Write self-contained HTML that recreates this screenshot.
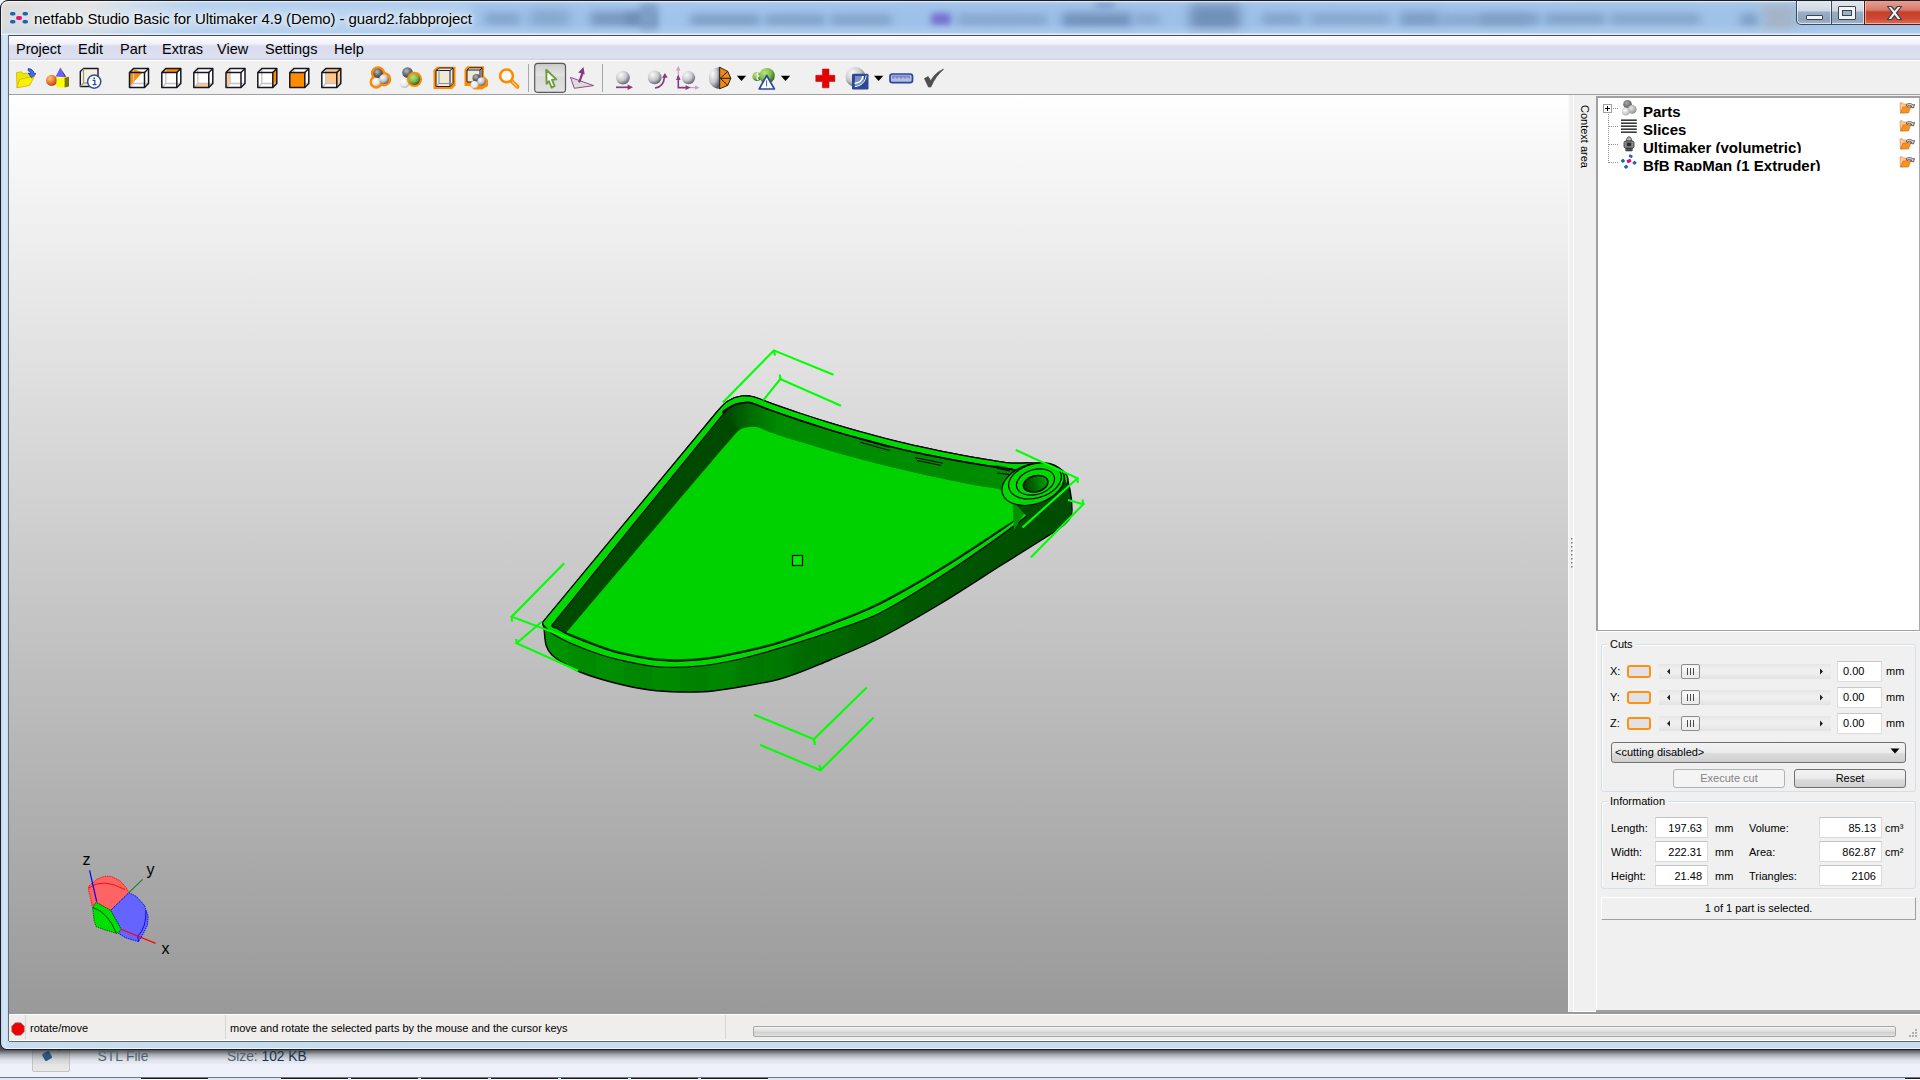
<!DOCTYPE html>
<html><head><meta charset="utf-8">
<style>
*{margin:0;padding:0;box-sizing:border-box}
html,body{width:1920px;height:1080px;overflow:hidden;background:#eef2f9;font-family:"Liberation Sans",sans-serif}
.a{position:absolute}
#frame{left:0;top:0;width:1930px;height:1049.5px;border-radius:8px 0 0 7px;background:linear-gradient(90deg,#c4daf0,#d6e6f6 4px,#c8dcf0 7px);border:1px solid #1b1f24;overflow:hidden}
#title{left:0;top:0;width:1920px;height:35px;overflow:hidden;border-radius:8px 0 0 0}
.blob{position:absolute;filter:blur(6px);border-radius:4px}
#menubar{left:8px;top:35px;width:1912px;height:25px;border-top:1px solid #454c57;background:linear-gradient(#fcfcfe 0px,#f0f1f8 8px,#dadcef 10px,#dde0f0 22px,#c8ccdc 24px)}
.menu{position:absolute;top:5px;font-size:14.5px;color:#000}
#toolbar{left:8px;top:60px;width:1912px;height:35px;background:#f0f0f0;border-bottom:1px solid #a0a0a0;border-top:1px solid #fff}
#vp{left:9px;top:95px;width:1559px;height:919px;background:linear-gradient(#fefefe,#999999)}
#status{left:9px;top:1014px;width:1911px;height:28px;background:#f0eeec;border-top:1px solid #fff;border-bottom:1px solid #5e6670;box-shadow:inset 0 -1px 0 #fff}
</style></head><body>
<div class="a" style="left:0;top:1048px;width:1920px;height:32px;background:#eef1f9"></div>
<div class="a" style="left:31.5px;top:1046px;width:38px;height:25.5px;background:linear-gradient(#d8d8d8,#e8e8e8);border:1px solid #c4c4c4;border-radius:0 0 2px 2px"></div>
<div class="a" style="left:43px;top:1051.5px;width:8px;height:7.5px;background:#0a4a88;border-radius:1.5px;transform:rotate(-30deg)"></div>
<div class="a" style="left:58px;top:1047px;width:5px;height:3px;background:#0a4a88;transform:rotate(-20deg)"></div>
<div class="a" style="left:0;top:1048px;width:1920px;height:16px;background:linear-gradient(rgba(20,22,26,0.95),rgba(50,54,60,0.75) 3px,rgba(90,94,100,0.45) 7px,rgba(150,154,160,0.18) 12px,rgba(238,241,249,0) 18px)"></div>
<div class="a" style="left:97.5px;top:1047.5px;font-size:13.8px;line-height:17px;color:#52606e;white-space:nowrap">STL File</div>
<div class="a" style="left:227px;top:1047.5px;font-size:13.8px;line-height:17px;color:#52606e;white-space:nowrap">Size: <span style="color:#1e3252">102 KB</span></div>
<div class="a" style="left:0;top:1077px;width:1920px;height:1px;background:#6a7888"></div>
<div class="a" style="left:0;top:1078px;width:1920px;height:2px;background:#dce8f6"></div>
<div class="a" style="left:141px;top:1078px;width:67px;height:2px;background:#fff;border-top:1px solid #1a1a1a"></div><div class="a" style="left:281px;top:1078px;width:67px;height:2px;background:#fff;border-top:1px solid #1a1a1a"></div><div class="a" style="left:351px;top:1078px;width:67px;height:2px;background:#fff;border-top:1px solid #1a1a1a"></div><div class="a" style="left:421px;top:1078px;width:67px;height:2px;background:#fff;border-top:1px solid #1a1a1a"></div><div class="a" style="left:491px;top:1078px;width:67px;height:2px;background:#fff;border-top:1px solid #1a1a1a"></div><div class="a" style="left:561px;top:1078px;width:67px;height:2px;background:#fff;border-top:1px solid #1a1a1a"></div><div class="a" style="left:631px;top:1078px;width:67px;height:2px;background:#fff;border-top:1px solid #1a1a1a"></div><div class="a" style="left:701px;top:1078px;width:67px;height:2px;background:#fff;border-top:1px solid #1a1a1a"></div><div class="a" style="left:1905px;top:1078px;width:15px;height:2px;background:#fff;border-top:1px solid #1a1a1a"></div>
<div class="a" style="left:0;top:1036px;width:10px;height:14px;background:linear-gradient(#2a2e34,#50545a)"></div>
<div id="frame" class="a"></div>
<div class="a" style="left:6px;top:1048px;width:1914px;height:1px;background:rgba(255,255,255,0.7)"></div>
<div id="title" class="a">
 <div class="a" style="left:1px;top:1px;width:1920px;height:34px;background:linear-gradient(90deg,#dcdcdc 0px,#e2e0de 90px,#c8d8ea 130px,#a8c8ec 200px,#9ec2ea 480px,#a0c4ec 700px,#9cc0e8 1000px,#9ec2ea 1500px,#a0c2e6 1920px)"></div>
 <div class="blob" style="left:30px;top:8px;width:440px;height:20px;background:rgba(225,236,246,0.55);filter:blur(8px)"></div>
 <div class="blob" style="left:485px;top:14px;width:35px;height:10px;background:#7e9ec4;filter:blur(5px)"></div>
 <div class="blob" style="left:530px;top:10px;width:40px;height:16px;background:#84a6cc;filter:blur(6px)"></div>
 <div class="blob" style="left:590px;top:12px;width:60px;height:14px;background:#7896be;filter:blur(5px)"></div>
 <div class="blob" style="left:625px;top:14px;width:30px;height:10px;background:#6c8cb4;filter:blur(4px)"></div>
 <div class="blob" style="left:640px;top:3px;width:18px;height:30px;background:#7c9ec6;filter:blur(3px)"></div>
 <div class="blob" style="left:690px;top:15px;width:70px;height:10px;background:#7a9ac0;filter:blur(4px)"></div>
 <div class="blob" style="left:765px;top:15px;width:60px;height:10px;background:#7e9ec4;filter:blur(4px)"></div>
 <div class="blob" style="left:830px;top:15px;width:62px;height:10px;background:#80a0c6;filter:blur(4px)"></div>
 <div class="blob" style="left:931px;top:13px;width:20px;height:12px;background:#7670d0;filter:blur(3px)"></div>
 <div class="blob" style="left:957px;top:15px;width:90px;height:10px;background:#82a2c8;filter:blur(5px)"></div>
 <div class="blob" style="left:1062px;top:13px;width:70px;height:14px;background:#7090ba;filter:blur(5px)"></div>
 <div class="blob" style="left:1095px;top:2px;width:20px;height:5px;background:#6a8cc0;filter:blur(3px)"></div>
 <div class="blob" style="left:1135px;top:14px;width:25px;height:10px;background:#86a6cc;filter:blur(4px)"></div>
 <div class="blob" style="left:1190px;top:3px;width:50px;height:28px;background:#7090b8;filter:blur(6px)"></div>
 <div class="blob" style="left:1262px;top:14px;width:40px;height:10px;background:#7e9ec4;filter:blur(5px)"></div>
 <div class="blob" style="left:1310px;top:14px;width:80px;height:10px;background:#82a2c8;filter:blur(5px)"></div>
 <div class="blob" style="left:1400px;top:12px;width:40px;height:14px;background:#7c9cc2;filter:blur(5px)"></div>
 <div class="blob" style="left:1440px;top:15px;width:90px;height:10px;background:#84a4ca;filter:blur(5px)"></div>
 <div class="blob" style="left:1480px;top:14px;width:60px;height:10px;background:#7e9ec4;filter:blur(4px)"></div>
 <div class="blob" style="left:1545px;top:14px;width:60px;height:10px;background:#7e9ec4;filter:blur(4px)"></div>
 <div class="blob" style="left:1610px;top:14px;width:90px;height:10px;background:#82a2c8;filter:blur(4px)"></div>
 <div class="blob" style="left:1740px;top:14px;width:18px;height:12px;background:#7e9ec4;filter:blur(4px)"></div>
 <div class="blob" style="left:1763px;top:4px;width:32px;height:28px;background:#a4b4c8;filter:blur(5px)"></div>
 <div class="a" style="left:0;top:0;width:1920px;height:35px;background:linear-gradient(rgba(255,255,255,0.3),rgba(255,255,255,0.05) 5px,rgba(255,255,255,0) 14px,rgba(170,200,235,0) 24px,rgba(190,215,240,0.5) 33px,rgba(235,242,250,0.9) 34px)"></div>
 <div class="a" style="left:0;top:0;width:1930px;height:50px;border:1px solid #1a1e24;border-radius:8px 0 0 0;box-shadow:inset 1px 1px 0 rgba(255,255,255,0.6)"></div>
 <svg class="a" style="left:9px;top:11px" width="20" height="14" viewBox="0 0 20 14">
  <g fill="#1766b2"><rect x="1" y="1" width="5.5" height="3.5" rx="1.7"/><rect x="13.5" y="1" width="5.5" height="3.5" rx="1.7"/><rect x="1" y="9" width="5.5" height="3.5" rx="1.7"/><rect x="13.5" y="9" width="5.5" height="3.5" rx="1.7"/></g>
  <rect x="7" y="5" width="6" height="4" rx="2" fill="#e8127a"/>
 </svg>
 <div class="a" style="left:34px;top:10px;font-size:15px;letter-spacing:-0.1px;color:#000;white-space:nowrap;text-shadow:0 0 8px #fff,0 0 4px #fff">netfabb Studio Basic for Ultimaker 4.9 (Demo) - guard2.fabbproject</div>
 <!-- window controls -->
 <div class="a" style="left:1796px;top:0;width:36px;height:25px;border:1px solid #3f4a58;border-top:none;border-radius:0 0 0 5px;background:linear-gradient(#e2e9f1,#cdd8e4 11px,#9aaec4 12px,#8ea3bd 20px,#a8bad0);box-shadow:inset 0 0 0 1px rgba(255,255,255,0.6)"></div>
 <div class="a" style="left:1806px;top:15px;width:17px;height:5px;background:#f4f4f4;border:1px solid #3a4350;border-radius:1px"></div>
 <div class="a" style="left:1831px;top:0;width:34px;height:25px;border:1px solid #3f4a58;border-top:none;border-left:none;background:linear-gradient(#e2e9f1,#cdd8e4 11px,#9aaec4 12px,#8ea3bd 20px,#a8bad0);box-shadow:inset 0 0 0 1px rgba(255,255,255,0.6)"></div>
 <div class="a" style="left:1838px;top:6px;width:18px;height:14px;background:#f4f4f4;border:1px solid #3a4350;border-radius:1px"></div>
 <div class="a" style="left:1842px;top:10px;width:10px;height:6px;background:#9cb0c6;border:1px solid #3a4350"></div>
 <div class="a" style="left:1864px;top:0;width:60px;height:25px;border:1px solid #5a1a10;border-top:none;background:linear-gradient(#e8a396,#d77b6c 10px,#c8402b 12px,#cc4630 18px,#d8705a);box-shadow:inset 0 0 0 1px rgba(255,220,210,0.6)"></div>
 <svg class="a" style="left:1885px;top:5px" width="19" height="16" viewBox="0 0 19 16"><path d="M2.5 1.5h4l3 3.5 3-3.5h4l-5 6.3 5 6.7h-4l-3-3.8-3 3.8h-4l5-6.7z" fill="#f2f2f2" stroke="#3a3f4a" stroke-width="1.2" stroke-linejoin="round"/></svg>
 <div class="a" style="left:1831px;top:0;width:1px;height:24px;background:#3f4a58"></div>
 <div class="a" style="left:1796px;top:0;width:124px;height:1px;background:#1a1e24"></div>
</div>
<div id="menubar" class="a">
 <span class="menu" style="left:8px">Project</span>
 <span class="menu" style="left:70px">Edit</span>
 <span class="menu" style="left:112px">Part</span>
 <span class="menu" style="left:154px">Extras</span>
 <span class="menu" style="left:209px">View</span>
 <span class="menu" style="left:257px">Settings</span>
 <span class="menu" style="left:326px">Help</span>
</div>
<div id="toolbar" class="a"></div>
<svg class="a" style="left:0;top:60px" width="960" height="35" viewBox="0 60 960 35">
<defs>
 <radialGradient id="gball" cx="0.35" cy="0.3" r="0.75"><stop offset="0" stop-color="#fafafa"/><stop offset="0.55" stop-color="#c8c8cc"/><stop offset="1" stop-color="#5a5e6a"/></radialGradient>
 <radialGradient id="gdark" cx="0.4" cy="0.35" r="0.7"><stop offset="0" stop-color="#b8bcc4"/><stop offset="0.5" stop-color="#6a6e7a"/><stop offset="1" stop-color="#30343c"/></radialGradient>
 <radialGradient id="gwhite" cx="0.4" cy="0.35" r="0.75"><stop offset="0" stop-color="#ffffff"/><stop offset="0.6" stop-color="#e8e8ea"/><stop offset="1" stop-color="#9a9ea8"/></radialGradient>
 <radialGradient id="ggreen" cx="0.35" cy="0.3" r="0.75"><stop offset="0" stop-color="#b4e874"/><stop offset="0.55" stop-color="#80b850"/><stop offset="1" stop-color="#2c5a1c"/></radialGradient>
 <radialGradient id="gorange" cx="0.35" cy="0.3" r="0.75"><stop offset="0" stop-color="#ffc080"/><stop offset="0.5" stop-color="#f08030"/><stop offset="1" stop-color="#a04010"/></radialGradient>
 <linearGradient id="gpress" x1="0" y1="0" x2="0" y2="1"><stop offset="0" stop-color="#c4c4c4"/><stop offset="0.12" stop-color="#d4d4d4"/><stop offset="0.42" stop-color="#e2e2e2"/><stop offset="0.46" stop-color="#d8d8d8"/><stop offset="1" stop-color="#e2e2e2"/></linearGradient>
</defs>
<!-- 1 folder -->
<path d="M16.5 72.5 L21.5 71.8 L23 73.6 L30 73.2 L30.5 80 L17 87.8 Z" fill="#eaea00" stroke="#e0a800" stroke-width="0.8"/>
<path d="M17 87.8 L19.5 79.5 L34.8 75.8 L29.5 85.5 Z" fill="#f4f400" stroke="#e0a800" stroke-width="0.8"/>
<path d="M28.3 68.6 C31.5 68.8 34 71 34.2 73.8 L36 73.6 L31.6 77.8 L28.4 73.3 L30.6 73.6 C30.5 72 29.6 71.2 28.2 70.8 Z" fill="#4070f0" stroke="#1838c0" stroke-width="0.9"/>
<!-- 2 shapes -->
<path d="M60.3 67.5 L55.6 76.6 L64.8 77.2 Z" fill="#6a5cf8"/>
<path d="M60.3 67.5 L64.8 77.2 L66 76.5 Z" fill="#2a2a70"/>
<circle cx="51.6" cy="80.4" r="5.6" fill="url(#gorange)"/>
<path d="M56.5 77.8 L64.6 77.8 L69 76.8 L69 86.6 L64.6 87.6 L56.5 87.6 Z" fill="#ffff00"/>
<path d="M64.6 77.8 L69 76.8 L69 86.6 L64.6 87.6 Z" fill="#78780a"/>
<!-- 3 cube info -->
<path d="M80.3 71.5 L83.5 68.5 L98 68.5 L98 83 L94.5 86.5 L80.3 86.5 Z" fill="#f4f0dc" stroke="#1a1a24" stroke-width="1.4" stroke-linejoin="round"/>
<path d="M83.5 68.8 L83.5 83 L98 83 M83.5 83 L80.5 86.3" fill="none" stroke="#9a9a9a" stroke-width="1.3"/>
<circle cx="94.2" cy="81.6" r="6.6" fill="#fff" stroke="#2c4c9c" stroke-width="1.5"/>
<circle cx="94.2" cy="78.2" r="0.9" fill="#2c4c9c"/>
<path d="M92.5 80.3 L94.8 80.3 L94.8 84.4 M92.6 84.6 L96.6 84.6" fill="none" stroke="#2c4c9c" stroke-width="1.3"/>
<g transform="translate(0,60)">
<polygon points="129.5,12.5 133.5,8.5 148.5,8.5 148.5,23.5 144.5,27.5 129.5,27.5" fill="#fff"/>
<polygon points="129.5,12.5 142.5,12.5 129.5,26.5" fill="#ff8c00"/>
<polygon points="130.5,12.0 133.5,9.0 141.5,12.0" fill="#ff8c00"/>
<polyline points="133.5,9.0 133.5,23.5 148.5,23.5" fill="none" stroke="#c4c4cc" stroke-width="1.4"/>
<line x1="133.5" y1="23.5" x2="130.0" y2="27.0" stroke="#c4c4cc" stroke-width="1.4"/>
<polygon points="129.5,12.5 133.5,8.5 148.5,8.5 148.5,23.5 144.5,27.5 129.5,27.5" fill="none" stroke="#16161e" stroke-width="1.5" stroke-linejoin="round"/>
<polyline points="129.5,12.5 144.5,12.5 144.5,27.5" fill="none" stroke="#16161e" stroke-width="1.5"/>
<line x1="144.5" y1="12.5" x2="148.5" y2="8.5" stroke="#16161e" stroke-width="1.5"/>
<polygon points="161.8,12.5 165.8,8.5 180.8,8.5 180.8,23.5 176.8,27.5 161.8,27.5" fill="#fff"/>
<polygon points="161.8,12.5 165.8,8.5 180.8,8.5 176.8,12.5" fill="#ff8c00"/>
<polyline points="165.8,9.0 165.8,23.5 180.8,23.5" fill="none" stroke="#c4c4cc" stroke-width="1.4"/>
<line x1="165.8" y1="23.5" x2="162.3" y2="27.0" stroke="#c4c4cc" stroke-width="1.4"/>
<polygon points="161.8,12.5 165.8,8.5 180.8,8.5 180.8,23.5 176.8,27.5 161.8,27.5" fill="none" stroke="#16161e" stroke-width="1.5" stroke-linejoin="round"/>
<polyline points="161.8,12.5 176.8,12.5 176.8,27.5" fill="none" stroke="#16161e" stroke-width="1.5"/>
<line x1="176.8" y1="12.5" x2="180.8" y2="8.5" stroke="#16161e" stroke-width="1.5"/>
<polygon points="193.8,12.5 197.8,8.5 212.8,8.5 212.8,23.5 208.8,27.5 193.8,27.5" fill="#fff"/>
<polygon points="193.8,27.5 197.8,23.5 212.8,23.5 208.8,27.5" fill="#ffc88a"/>
<polyline points="197.8,9.0 197.8,23.5 212.8,23.5" fill="none" stroke="#c4c4cc" stroke-width="1.4"/>
<line x1="197.8" y1="23.5" x2="194.3" y2="27.0" stroke="#c4c4cc" stroke-width="1.4"/>
<polygon points="193.8,12.5 197.8,8.5 212.8,8.5 212.8,23.5 208.8,27.5 193.8,27.5" fill="none" stroke="#16161e" stroke-width="1.5" stroke-linejoin="round"/>
<polyline points="193.8,12.5 208.8,12.5 208.8,27.5" fill="none" stroke="#16161e" stroke-width="1.5"/>
<line x1="208.8" y1="12.5" x2="212.8" y2="8.5" stroke="#16161e" stroke-width="1.5"/>
<polygon points="226.0,12.5 230.0,8.5 245.0,8.5 245.0,23.5 241.0,27.5 226.0,27.5" fill="#fff"/>
<polygon points="226.0,12.5 230.0,8.5 230.0,23.5 226.0,27.5" fill="#ffc88a"/>
<polyline points="230.0,9.0 230.0,23.5 245.0,23.5" fill="none" stroke="#c4c4cc" stroke-width="1.4"/>
<line x1="230" y1="23.5" x2="226.5" y2="27.0" stroke="#c4c4cc" stroke-width="1.4"/>
<polygon points="226.0,12.5 230.0,8.5 245.0,8.5 245.0,23.5 241.0,27.5 226.0,27.5" fill="none" stroke="#16161e" stroke-width="1.5" stroke-linejoin="round"/>
<polyline points="226.0,12.5 241.0,12.5 241.0,27.5" fill="none" stroke="#16161e" stroke-width="1.5"/>
<line x1="241" y1="12.5" x2="245" y2="8.5" stroke="#16161e" stroke-width="1.5"/>
<polygon points="257.8,12.5 261.8,8.5 276.8,8.5 276.8,23.5 272.8,27.5 257.8,27.5" fill="#fff"/>
<polygon points="272.8,12.5 276.8,8.5 276.8,23.5 272.8,27.5" fill="#ff8c00"/>
<polyline points="261.8,9.0 261.8,23.5 276.8,23.5" fill="none" stroke="#c4c4cc" stroke-width="1.4"/>
<line x1="261.8" y1="23.5" x2="258.3" y2="27.0" stroke="#c4c4cc" stroke-width="1.4"/>
<polygon points="257.8,12.5 261.8,8.5 276.8,8.5 276.8,23.5 272.8,27.5 257.8,27.5" fill="none" stroke="#16161e" stroke-width="1.5" stroke-linejoin="round"/>
<polyline points="257.8,12.5 272.8,12.5 272.8,27.5" fill="none" stroke="#16161e" stroke-width="1.5"/>
<line x1="272.8" y1="12.5" x2="276.8" y2="8.5" stroke="#16161e" stroke-width="1.5"/>
<polygon points="289.8,12.5 293.8,8.5 308.8,8.5 308.8,23.5 304.8,27.5 289.8,27.5" fill="#fff"/>
<polygon points="289.8,12.5 304.8,12.5 304.8,27.5 289.8,27.5" fill="#ff8c00"/>
<polyline points="293.8,9.0 293.8,23.5 308.8,23.5" fill="none" stroke="#c4c4cc" stroke-width="1.4"/>
<line x1="293.8" y1="23.5" x2="290.3" y2="27.0" stroke="#c4c4cc" stroke-width="1.4"/>
<polygon points="289.8,12.5 304.8,12.5 304.8,27.5 289.8,27.5" fill="#ff8c00"/>
<polygon points="289.8,12.5 293.8,8.5 308.8,8.5 308.8,23.5 304.8,27.5 289.8,27.5" fill="none" stroke="#16161e" stroke-width="1.5" stroke-linejoin="round"/>
<polyline points="289.8,12.5 304.8,12.5 304.8,27.5" fill="none" stroke="#16161e" stroke-width="1.5"/>
<line x1="304.8" y1="12.5" x2="308.8" y2="8.5" stroke="#16161e" stroke-width="1.5"/>
<polygon points="321.8,12.5 325.8,8.5 340.8,8.5 340.8,23.5 336.8,27.5 321.8,27.5" fill="#fff"/>
<polygon points="325.8,8.5 340.8,8.5 340.8,23.5 325.8,23.5" fill="#ffc88a"/>
<polyline points="325.8,9.0 325.8,23.5 340.8,23.5" fill="none" stroke="#c4c4cc" stroke-width="1.4"/>
<line x1="325.8" y1="23.5" x2="322.3" y2="27.0" stroke="#c4c4cc" stroke-width="1.4"/>
<polygon points="321.8,12.5 325.8,8.5 340.8,8.5 340.8,23.5 336.8,27.5 321.8,27.5" fill="none" stroke="#16161e" stroke-width="1.5" stroke-linejoin="round"/>
<polyline points="321.8,12.5 336.8,12.5 336.8,27.5" fill="none" stroke="#16161e" stroke-width="1.5"/>
<line x1="336.8" y1="12.5" x2="340.8" y2="8.5" stroke="#16161e" stroke-width="1.5"/>
</g>
<!-- 11 parts -->
<g stroke="#ff8a00" stroke-width="5" fill="#ff8a00"><circle cx="378" cy="73.3" r="4.6"/><circle cx="384" cy="79.2" r="4.8"/><circle cx="376.2" cy="82" r="4.2"/></g>
<circle cx="378" cy="73.3" r="4.8" fill="url(#gdark)"/>
<circle cx="376.2" cy="82" r="4.3" fill="url(#gwhite)"/>
<circle cx="384" cy="79.2" r="4.9" fill="url(#gball)"/>
<!-- 12 -->
<circle cx="407.5" cy="72.5" r="5.3" fill="url(#gdark)"/>
<circle cx="404.5" cy="83" r="5" fill="url(#gwhite)"/>
<circle cx="414.5" cy="79.3" r="7.6" fill="#ff8a00"/>
<circle cx="414.5" cy="79.3" r="5.6" fill="url(#ggreen)"/>
<!-- 13 cube orange outline -->
<path d="M437 66.8 L455.5 66.8 L455.5 85.5 L452 89 L433.5 89 L433.5 70.3 Z" fill="#ff8a00"/>
<path d="M436 70.5 L439 68 L453 68 L453 83.5 L450 86.5 L436 86.5 Z" fill="#efead6" stroke="#1a1a30" stroke-width="1"/>
<path d="M436 70.5 L450 70.5 L450 86.5 M450 70.5 L453 68" fill="none" stroke="#1a1a30" stroke-width="1"/>
<path d="M439 68 L439 83.5 L453 83.5 M439 83.5 L436 86.5" fill="none" stroke="#8e8e90" stroke-width="1"/>
<!-- 14 cube+balls -->
<path d="M467.5 66.3 L484 66.3 L484 76 L488 80 L488 86 L482 89.6 L474 89.6 L470 86 L464.5 86 L464.5 69.5 Z" fill="#ff8a00"/>
<path d="M467 70 L469.5 67.8 L482 67.8 L482 82 L467 82 Z" fill="#efead6" stroke="#1a1a30" stroke-width="1"/>
<path d="M467 70 L480 70 L480 82 M480 70 L482 67.8" fill="none" stroke="#1a1a30" stroke-width="1"/>
<circle cx="476.5" cy="78" r="4" fill="url(#gdark)"/>
<circle cx="481.5" cy="81.5" r="4.2" fill="url(#gball)"/>
<circle cx="474.5" cy="84.8" r="3.8" fill="url(#gwhite)"/>
<!-- 15 magnifier -->
<circle cx="506.5" cy="75.9" r="6.4" fill="#fffcf6" stroke="#ff8a00" stroke-width="2.6"/>
<path d="M512 81.5 L517.5 86.8" stroke="#ff8a00" stroke-width="4" stroke-linecap="round"/>
<path d="M512.5 82 L517 86.3" stroke="#fff" stroke-width="1" stroke-linecap="round"/>
<line x1="528.5" y1="64" x2="528.5" y2="92" stroke="#a8a8a8" stroke-width="1"/>
<!-- 16 pressed select -->
<rect x="534.7" y="63.4" width="30.8" height="29" rx="3.2" fill="url(#gpress)" stroke="#5a5a5a" stroke-width="1.2"/>
<path d="M546.3 69.8 L556.3 79.4 L552 79.8 L554.6 86 L551.6 87.6 L549 81.2 L546.6 83.8 Z" fill="#fff" stroke="#6a9e3c" stroke-width="1.9" stroke-linejoin="round"/>
<!-- 17 plane -->
<path d="M570.5 77.4 L593.6 85.6 L574.3 88.3 Z" fill="#dcdcdc" stroke="#8a3a7e" stroke-width="0.9"/>
<path d="M579.1 82.3 L582.6 73" stroke="#8a3a7e" stroke-width="2.2"/>
<path d="M583.5 66.9 L578.2 72.6 L584.7 74.4 Z" fill="#8a3a7e"/>
<line x1="602.5" y1="64" x2="602.5" y2="92" stroke="#a8a8a8" stroke-width="1"/>
<!-- 18 -->
<circle cx="622.9" cy="77.6" r="6.9" fill="url(#gball)"/>
<path d="M616 87.3 L628 87.3" stroke="#8a3a7e" stroke-width="1.7"/>
<path d="M633 87.3 L627.6 84.6 L627.6 90 Z" fill="#8a3a7e"/>
<!-- 19 -->
<circle cx="654.7" cy="77.4" r="6.9" fill="url(#gball)"/>
<path d="M655 88 C660 87.5 664 84 664.5 76.5" fill="none" stroke="#8a3a7e" stroke-width="1.7"/>
<path d="M665 73 L662 77.8 L667.6 77.8 Z" fill="#8a3a7e"/>
<!-- 20 -->
<circle cx="688.5" cy="77.6" r="6.6" fill="url(#gball)"/>
<path d="M678.3 68 L678.3 78" stroke="#c8a0c4" stroke-width="1.2"/>
<path d="M678.3 66 L676 70.5 L680.6 70.5 Z" fill="#c8a0c4"/>
<path d="M690 87.6 L698 87.6" stroke="#c8a0c4" stroke-width="1.2"/>
<path d="M699.5 87.6 L695 85.4 L695 89.8 Z" fill="#c8a0c4"/>
<path d="M678.3 76 L678.3 87.6 L688 87.6" fill="none" stroke="#8a3a7e" stroke-width="1.6"/>
<path d="M678.3 74.8 L676 80 L680.6 80 Z M690.8 87.6 L685.6 85.2 L685.6 90 Z" fill="#8a3a7e"/>
<!-- 21 half sphere -->
<path d="M719.6 67.2 A10.8 10.8 0 0 0 719.6 88.8 Z" fill="url(#gball)"/>
<path d="M719.6 67.2 L727.8 71.4 L730.8 78.3 L727.8 85.4 L719.6 88.8 Z" fill="#f08a10" stroke="#111" stroke-width="0.9" stroke-linejoin="round"/>
<path d="M727.8 71.4 L720.3 78.3 L727.8 85.4 M720.3 78.3 L730.8 78.3" fill="none" stroke="#111" stroke-width="0.9"/>
<line x1="719.6" y1="67.2" x2="719.6" y2="88.8" stroke="#333" stroke-width="1"/>
<path d="M736.8 75.8 L746.2 75.8 L741.5 81 Z" fill="#000"/>
<!-- 22 green sphere warning -->
<circle cx="757" cy="76.5" r="4.6" fill="url(#ggreen)"/>
<path d="M758.5 72.5 C756.5 73.5 756.5 75 758.5 76 C756.5 77 756.5 79 758.5 80" fill="none" stroke="#f0f0f0" stroke-width="1.4"/>
<circle cx="767" cy="75.8" r="7.8" fill="url(#ggreen)"/>
<path d="M766.7 75.5 L759.2 89 L774.4 89 Z" fill="#fff" stroke="#2c48a0" stroke-width="1.7" stroke-linejoin="round"/>
<line x1="766.6" y1="80.4" x2="766.6" y2="86.4" stroke="#2c48a0" stroke-width="0.9"/>
<path d="M780.8 75.8 L790.2 75.8 L785.5 81 Z" fill="#000"/>
<!-- 23 red cross -->
<path d="M822.4 69 L829 69 L829 75.3 L834.9 75.3 L834.9 81.5 L829 81.5 L829 87.8 L822.4 87.8 L822.4 81.5 L815.8 81.5 L815.8 75.3 L822.4 75.3 Z" fill="#e80000" stroke="#a02020" stroke-width="0.6"/>
<!-- 24 sphere + blue -->
<circle cx="855.5" cy="77" r="10" fill="url(#gball)"/>
<rect x="852" y="73.8" width="16.5" height="15.8" rx="1.4" fill="#2e4898"/>
<path d="M855 76 L864 76 L864 80 C862.8 84 860 86 855 86.5 Z" fill="#7890c8"/>
<path d="M854.8 86.6 C861 86 865.5 82 866.2 75.5" fill="none" stroke="#fff" stroke-width="1"/>
<path d="M854.5 83.5 C859.5 83 862.5 80 863 76" fill="none" stroke="#fff" stroke-width="1.6"/>
<path d="M874 75.7 L883.3 75.7 L878.6 81 Z" fill="#000"/>
<!-- 25 ruler -->
<rect x="890" y="74" width="22.5" height="8.6" rx="2.4" fill="#b4bee0" stroke="#2c44a0" stroke-width="1.7"/>
<path d="M893 75.5v3 M895 75.5v2 M897 75.5v3 M899 75.5v2 M901 75.5v3 M903 75.5v2 M905 75.5v3 M907 75.5v2 M909 75.5v3" stroke="#2c44a0" stroke-width="0.8"/>
<!-- 26 check -->
<path d="M924.5 78.5 L928.2 76.6 L930.8 81 C934 75 938 71.5 943.5 69.3 C938.5 73.5 934 79.5 930.8 87 L928.5 87 Z" fill="#4e4e4e" stroke="#4e4e4e" stroke-width="0.8" stroke-linejoin="round"/>
</svg>
<div id="vp" class="a"></div>
<svg class="a" style="left:70px;top:845px" width="110" height="115" viewBox="70 845 110 115">
<polygon points="110.7,910.4 128.9,892.7 125.9,887.5 120.0,880.8 111.1,876.4 104.4,876.4 97.0,879.3 88.9,886.0 88.5,889.7 90.4,897.1 92.2,906.0 96.3,902.3" fill="#ff6464" stroke="#f00" stroke-width="0.9" stroke-dasharray="1.5 0.8"/>
<polygon points="110.7,910.4 128.9,892.7 136.3,896.4 144.4,905.3 148.1,916.4 147.4,925.3 143.0,934.1 138.5,941.6 125.9,937.9 118.5,933.4 121.1,929.3" fill="#6464ff" stroke="#00f" stroke-width="0.9" stroke-dasharray="1.5 0.8"/>
<polygon points="110.7,910.4 121.1,929.3 117.0,933.4 104.4,929.7 96.3,926.7 94.1,920.8 92.6,907.5 96.3,902.3" fill="#00e000" stroke="#005000" stroke-width="0.8" stroke-dasharray="1.5 0.8"/>
<path d="M88.5,888.2 Q102.2,877.1 125.2,889.7" fill="none" stroke="#f00" stroke-width="0.9"/>
<path d="M92.6,907.5 Q108.1,911.9 116.3,933.4" fill="none" stroke="#003000" stroke-width="0.9"/>
<path d="M145.9,910.4 Q146.7,926.7 137.8,936.4 L138.5,941.6" fill="none" stroke="#00f" stroke-width="0.9"/>
<line x1="89.6" y1="870.4" x2="96.7" y2="901.6" stroke="#0000ff" stroke-width="1.2"/>
<line x1="128.9" y1="892.7" x2="142.6" y2="879.3" stroke="#208020" stroke-width="1.1"/>
<line x1="121.1" y1="929.3" x2="155.6" y2="943.4" stroke="#ff0000" stroke-width="1.2"/>
</svg>
<div class="a" style="left:82.5px;top:850px;font-size:16px;line-height:20px;color:#000">z</div>
<div class="a" style="left:146.5px;top:859.5px;font-size:16px;line-height:20px;color:#000">y</div>
<div class="a" style="left:161.5px;top:939px;font-size:16px;line-height:20px;color:#000">x</div>
<!--MODEL--><svg class="a" style="left:480px;top:330px" width="640" height="460" viewBox="480 330 640 460">
<defs>
 <linearGradient id="wallg" x1="540" y1="0" x2="1075" y2="0" gradientUnits="userSpaceOnUse"><stop offset="0" stop-color="#009400"/><stop offset="0.35" stop-color="#008600"/><stop offset="0.55" stop-color="#006800"/><stop offset="0.8" stop-color="#005400"/><stop offset="1" stop-color="#004c00"/></linearGradient>
 <linearGradient id="twg" x1="730" y1="0" x2="780" y2="0" gradientUnits="userSpaceOnUse"><stop offset="0" stop-color="#004c00"/><stop offset="0.4" stop-color="#006c00"/><stop offset="1" stop-color="#008c00"/></linearGradient>
 <linearGradient id="holeg" x1="1023" y1="0" x2="1049" y2="0" gradientUnits="userSpaceOnUse"><stop offset="0" stop-color="#003c00"/><stop offset="0.6" stop-color="#007c00"/><stop offset="1" stop-color="#00a800"/></linearGradient>
</defs>
<clipPath id="silclip"><path d="M716.0,413.0 C719.8,408.4 723.6,403.8 728.0,401.0 C732.4,398.2 737.8,396.6 742.0,396.0 C746.2,395.4 749.9,396.0 754.0,397.0 C758.1,398.0 764.4,400.9 770.0,402.9 C775.6,404.9 789.5,409.8 800.0,413.3 C810.5,416.8 819.5,419.7 830.0,422.9 C840.5,426.1 849.5,428.7 860.0,431.6 C870.5,434.5 879.5,437.0 890.0,439.6 C900.5,442.2 909.5,444.4 920.0,446.7 C930.5,449.0 939.5,450.9 950.0,452.9 C960.5,454.9 969.5,456.6 980.0,458.4 C990.5,460.2 1003.0,462.4 1010.0,463.0 C1017.0,463.6 1023.0,462.7 1030.0,463.0 C1037.0,463.3 1044.7,463.6 1050.0,465.0 C1055.3,466.4 1060.6,467.7 1064.0,472.0 C1067.4,476.3 1068.6,483.5 1070.0,490.0 C1071.4,496.5 1072.0,507.1 1072.0,510.0 C1072.0,512.9 1071.6,515.6 1070.0,518.0 C1068.4,520.4 1063.9,525.0 1060.0,528.0 C1056.1,531.0 1047.1,536.5 1040.0,541.0 C1032.9,545.5 1014.0,557.2 1000.0,566.0 C986.0,574.8 960.7,591.6 940.0,604.0 C919.3,616.4 897.0,629.3 880.0,638.0 C863.0,646.7 847.3,652.9 830.0,660.0 C812.7,667.1 798.1,674.2 780.0,679.0 C761.9,683.8 724.5,689.5 713.0,691.0 C701.5,692.5 690.5,692.2 680.0,692.0 C669.5,691.8 660.4,691.4 650.0,690.0 C639.6,688.6 627.1,686.1 615.0,683.0 C602.9,679.9 586.7,674.7 580.0,672.0 C573.3,669.3 565.7,664.2 562.0,662.0 C558.3,659.8 554.8,658.0 552.0,655.0 C549.2,652.0 547.2,648.9 546.0,645.0 C544.8,641.1 544.3,630.1 544.0,628.0 C543.7,625.9 541.7,623.7 543.0,622.0 C544.3,620.3 712.2,417.6 716.0,413.0Z"/></clipPath>
<path d="M716.0,413.0 C719.8,408.4 723.6,403.8 728.0,401.0 C732.4,398.2 737.8,396.6 742.0,396.0 C746.2,395.4 749.9,396.0 754.0,397.0 C758.1,398.0 764.4,400.9 770.0,402.9 C775.6,404.9 789.5,409.8 800.0,413.3 C810.5,416.8 819.5,419.7 830.0,422.9 C840.5,426.1 849.5,428.7 860.0,431.6 C870.5,434.5 879.5,437.0 890.0,439.6 C900.5,442.2 909.5,444.4 920.0,446.7 C930.5,449.0 939.5,450.9 950.0,452.9 C960.5,454.9 969.5,456.6 980.0,458.4 C990.5,460.2 1003.0,462.4 1010.0,463.0 C1017.0,463.6 1023.0,462.7 1030.0,463.0 C1037.0,463.3 1044.7,463.6 1050.0,465.0 C1055.3,466.4 1060.6,467.7 1064.0,472.0 C1067.4,476.3 1068.6,483.5 1070.0,490.0 C1071.4,496.5 1072.0,507.1 1072.0,510.0 C1072.0,512.9 1071.6,515.6 1070.0,518.0 C1068.4,520.4 1063.9,525.0 1060.0,528.0 C1056.1,531.0 1047.1,536.5 1040.0,541.0 C1032.9,545.5 1014.0,557.2 1000.0,566.0 C986.0,574.8 960.7,591.6 940.0,604.0 C919.3,616.4 897.0,629.3 880.0,638.0 C863.0,646.7 847.3,652.9 830.0,660.0 C812.7,667.1 798.1,674.2 780.0,679.0 C761.9,683.8 724.5,689.5 713.0,691.0 C701.5,692.5 690.5,692.2 680.0,692.0 C669.5,691.8 660.4,691.4 650.0,690.0 C639.6,688.6 627.1,686.1 615.0,683.0 C602.9,679.9 586.7,674.7 580.0,672.0 C573.3,669.3 565.7,664.2 562.0,662.0 C558.3,659.8 554.8,658.0 552.0,655.0 C549.2,652.0 547.2,648.9 546.0,645.0 C544.8,641.1 544.3,630.1 544.0,628.0 C543.7,625.9 541.7,623.7 543.0,622.0 C544.3,620.3 712.2,417.6 716.0,413.0Z" fill="url(#wallg)" stroke="#000" stroke-width="1.4"/>
<g clip-path="url(#silclip)"><rect x="540" y="600" width="28" height="100" fill="rgba(0,0,0,0.0)"/><rect x="568" y="600" width="28" height="100" fill="rgba(0,0,0,0.04)"/><rect x="596" y="600" width="28" height="100" fill="rgba(0,0,0,0.0)"/><rect x="624" y="600" width="28" height="100" fill="rgba(0,0,0,0.04)"/><rect x="652" y="600" width="28" height="100" fill="rgba(0,0,0,0.0)"/><rect x="680" y="600" width="28" height="100" fill="rgba(0,0,0,0.04)"/><rect x="708" y="600" width="28" height="100" fill="rgba(0,0,0,0.0)"/><rect x="736" y="600" width="28" height="100" fill="rgba(0,0,0,0.04)"/><rect x="764" y="600" width="28" height="100" fill="rgba(0,0,0,0.0)"/><rect x="792" y="600" width="28" height="100" fill="rgba(0,0,0,0.04)"/><rect x="820" y="600" width="28" height="100" fill="rgba(0,0,0,0.0)"/><rect x="848" y="600" width="28" height="100" fill="rgba(0,0,0,0.04)"/><rect x="876" y="600" width="28" height="100" fill="rgba(0,0,0,0.0)"/><rect x="904" y="600" width="28" height="100" fill="rgba(0,0,0,0.04)"/><rect x="932" y="600" width="28" height="100" fill="rgba(0,0,0,0.0)"/><rect x="960" y="600" width="28" height="100" fill="rgba(0,0,0,0.04)"/><rect x="988" y="600" width="28" height="100" fill="rgba(0,0,0,0.0)"/><rect x="1016" y="600" width="28" height="100" fill="rgba(0,0,0,0.04)"/><rect x="1044" y="600" width="28" height="100" fill="rgba(0,0,0,0.0)"/><rect x="1072" y="600" width="28" height="100" fill="rgba(0,0,0,0.04)"/></g>
<path d="M716.0,413.0 C719.8,408.4 723.6,403.8 728.0,401.0 C732.4,398.2 737.8,396.6 742.0,396.0 C746.2,395.4 749.9,396.0 754.0,397.0 C758.1,398.0 764.4,400.9 770.0,402.9 C775.6,404.9 789.5,409.8 800.0,413.3 C810.5,416.8 819.5,419.7 830.0,422.9 C840.5,426.1 849.5,428.7 860.0,431.6 C870.5,434.5 879.5,437.0 890.0,439.6 C900.5,442.2 909.5,444.4 920.0,446.7 C930.5,449.0 939.5,450.9 950.0,452.9 C960.5,454.9 969.5,456.6 980.0,458.4 C990.5,460.2 1003.0,462.4 1010.0,463.0 C1017.0,463.6 1023.0,462.7 1030.0,463.0 C1037.0,463.3 1044.7,463.6 1050.0,465.0 C1055.3,466.4 1061.6,470.0 1064.0,472.0 C1066.4,474.0 1068.0,476.9 1068.0,480.0 C1068.0,483.1 1065.6,486.1 1064.0,488.0 C1062.4,489.9 1060.0,490.5 1058.0,492.0 C1056.0,493.5 1020.6,521.1 1000.0,536.0 C979.4,550.9 960.6,563.8 940.0,577.0 C919.4,590.2 896.7,604.6 880.0,613.0 C863.3,621.4 847.3,625.9 830.0,632.0 C812.7,638.1 793.9,643.8 780.0,648.0 C766.1,652.2 753.9,655.9 740.0,659.0 C726.1,662.1 713.9,664.6 700.0,666.0 C686.1,667.4 674.0,668.0 660.0,667.0 C646.0,666.0 627.1,661.5 620.0,660.0 C612.9,658.5 606.9,656.8 600.0,654.5 C593.1,652.2 576.2,645.7 570.0,643.0 C563.8,640.3 556.1,636.0 553.0,634.0 C549.9,632.0 546.2,628.4 545.0,627.0 C543.8,625.6 541.8,623.5 543.0,622.0 C544.2,620.5 712.2,417.6 716.0,413.0Z" fill="#00d800" stroke="#000" stroke-width="1.2"/>
<path d="M724.0,413.0 C726.4,410.1 728.8,407.8 732.0,406.0 C735.2,404.2 739.1,403.5 742.0,403.0 C744.9,402.5 747.6,402.0 750.5,402.7 C753.4,403.4 763.1,407.5 770.0,410.0 C776.9,412.5 789.5,416.9 800.0,420.4 C810.5,423.9 819.5,426.8 830.0,430.0 C840.5,433.2 849.5,435.8 860.0,438.7 C870.5,441.6 879.5,443.9 890.0,446.5 C900.5,449.1 909.5,451.1 920.0,453.4 C930.5,455.7 939.5,457.4 950.0,459.4 C960.5,461.4 969.5,463.0 980.0,464.6 C990.5,466.2 1002.7,467.1 1010.0,468.8 C1017.3,470.5 1026.4,469.5 1030.0,476.0 C1033.6,482.5 1030.4,502.0 1030.0,505.0 C1029.6,508.0 1027.3,510.0 1025.0,512.0 C1022.7,514.0 1009.1,524.8 1000.0,531.0 C990.9,537.2 960.6,557.5 940.0,570.0 C919.4,582.5 897.0,595.5 880.0,604.0 C863.0,612.5 847.3,618.2 830.0,625.0 C812.7,631.8 793.8,638.7 780.0,643.0 C766.2,647.3 753.9,650.0 740.0,653.0 C726.1,656.0 713.9,658.7 700.0,660.0 C686.1,661.3 674.0,661.6 660.0,660.5 C646.0,659.4 627.2,655.1 620.0,653.5 C612.8,651.9 606.9,649.8 600.0,647.3 C593.1,644.8 574.4,637.4 570.0,635.5 C565.6,633.6 560.2,630.3 558.0,629.0 C555.8,627.7 550.5,627.0 552.0,625.0 C553.5,623.0 721.6,415.9 724.0,413.0Z" fill="#004a00" stroke="#000" stroke-width="1.1"/>
<path d="M728.0,410.0 C728.4,404.5 739.2,403.9 742.0,403.0 C744.8,402.1 747.6,402.0 750.5,402.7 C753.4,403.4 763.1,407.5 770.0,410.0 C776.9,412.5 789.5,416.9 800.0,420.4 C810.5,423.9 819.5,426.8 830.0,430.0 C840.5,433.2 849.5,435.8 860.0,438.7 C870.5,441.6 879.5,443.9 890.0,446.5 C900.5,449.1 909.5,451.1 920.0,453.4 C930.5,455.7 939.5,457.4 950.0,459.4 C960.5,461.4 969.5,463.0 980.0,464.6 C990.5,466.2 1003.6,463.2 1010.0,468.8 C1016.4,474.4 1013.9,489.1 1012.0,493.0 C1010.1,496.9 1004.3,490.4 1000.0,489.5 C995.7,488.6 987.0,487.3 980.0,486.0 C973.0,484.7 960.5,482.3 950.0,480.2 C939.5,478.1 930.5,476.1 920.0,473.8 C909.5,471.5 900.5,469.4 890.0,466.8 C879.5,464.2 870.5,461.9 860.0,459.1 C849.5,456.3 840.5,453.7 830.0,450.7 C819.5,447.7 810.5,445.0 800.0,441.8 C789.5,438.6 775.6,434.0 770.0,432.2 C764.4,430.4 759.0,427.2 754.0,426.8 C749.0,426.4 744.2,432.7 740.0,430.0 C735.8,427.3 727.6,415.5 728.0,410.0Z" fill="url(#twg)"/>
<path d="M737.0,432.0 C741.3,427.5 748.1,426.8 754.0,426.8 C759.9,426.8 764.4,430.4 770.0,432.2 C775.6,434.0 789.5,438.6 800.0,441.8 C810.5,445.0 819.5,447.7 830.0,450.7 C840.5,453.7 849.5,456.3 860.0,459.1 C870.5,461.9 879.5,464.2 890.0,466.8 C900.5,469.4 909.5,471.5 920.0,473.8 C930.5,476.1 939.5,478.1 950.0,480.2 C960.5,482.3 973.0,484.7 980.0,486.0 C987.0,487.3 995.4,488.1 1000.0,489.5 C1004.6,490.9 1008.7,492.6 1012.0,496.0 C1015.3,499.4 1024.3,505.8 1022.0,512.0 C1019.7,518.2 1008.0,523.5 1000.0,529.0 C992.0,534.5 960.6,555.5 940.0,568.0 C919.4,580.5 897.0,593.5 880.0,602.0 C863.0,610.5 847.3,616.2 830.0,623.0 C812.7,629.8 793.8,636.7 780.0,641.0 C766.2,645.3 753.9,648.0 740.0,651.0 C726.1,654.0 713.9,656.7 700.0,658.0 C686.1,659.3 674.0,659.6 660.0,658.5 C646.0,657.4 627.2,653.1 620.0,651.5 C612.8,649.9 606.9,647.8 600.0,645.3 C593.1,642.8 571.1,633.9 570.0,633.5 C568.9,633.1 566.3,632.9 567.0,632.0 C567.7,631.1 606.6,585.2 628.0,560.0 C649.4,534.8 732.7,436.5 737.0,432.0Z" fill="#00d200"/>
<path d="M724.0,413.0 C720.4,412.2 728.8,407.8 732.0,406.0 C735.2,404.2 739.1,403.5 742.0,403.0 C744.9,402.5 747.6,402.0 750.5,402.7 C753.4,403.4 763.1,407.5 770.0,410.0 C776.9,412.5 789.5,416.9 800.0,420.4 C810.5,423.9 819.5,426.8 830.0,430.0 C840.5,433.2 849.5,435.8 860.0,438.7 C870.5,441.6 879.5,443.9 890.0,446.5 C900.5,449.1 909.5,451.1 920.0,453.4 C930.5,455.7 939.5,457.4 950.0,459.4 C960.5,461.4 969.5,463.0 980.0,464.6 C990.5,466.2 1020.4,470.9 1010.0,468.8" fill="none" stroke="#000" stroke-width="1.8"/>
<path d="M1012,493 L1014,530 L1025,512 Z" fill="#009000"/>
<!-- boss -->
<path d="M1064,472 L1072,512 L1060,528 L1030,520 L1012,500 Z" fill="#004c00"/>
<ellipse cx="1033" cy="484" rx="32" ry="20" transform="rotate(-18 1033 484)" fill="#00d800" stroke="#000" stroke-width="1.2"/>
<ellipse cx="1035" cy="481" rx="27" ry="17" transform="rotate(-16 1035 481)" fill="#00d800" stroke="#000" stroke-width="1.2"/>
<ellipse cx="1035.5" cy="482" rx="19.5" ry="12.5" transform="rotate(-16 1035.5 482)" fill="#00d800" stroke="#000" stroke-width="1.2"/>
<ellipse cx="1035.7" cy="483.8" rx="12.5" ry="8" transform="rotate(-14 1035.7 483.8)" fill="url(#holeg)" stroke="#000" stroke-width="1.4"/>
<path d="M859.5,438.8 L889,447.3 M860.3,442.2 L889.8,450.6 M915,457.6 L942.5,463.2 M917,460.5 L941,465.4 M996.7,468.2 L1010,471 M997.4,473.2 L1010,474.5" stroke="#000" stroke-width="1" fill="none"/>
<rect x="792.5" y="555.5" width="10" height="10" fill="#00ee00" stroke="#000" stroke-width="1.2"/>
<line x1="773.9" y1="350.4" x2="775" y2="355.5" stroke="#00ff00" stroke-width="2.1"/><line x1="780.3" y1="379" x2="779.8" y2="374.5" stroke="#00ff00" stroke-width="2.1"/><line x1="511.7" y1="616.7" x2="512" y2="621.5" stroke="#00ff00" stroke-width="2.1"/><line x1="516.7" y1="643.3" x2="516.2" y2="639" stroke="#00ff00" stroke-width="2.1"/><line x1="813.9" y1="739.3" x2="815" y2="745" stroke="#00ff00" stroke-width="2.1"/><line x1="820.4" y1="770.3" x2="819.6" y2="764.8" stroke="#00ff00" stroke-width="2.1"/><line x1="1077.5" y1="478.3" x2="1077.8" y2="483" stroke="#00ff00" stroke-width="2.1"/><line x1="1083.3" y1="504.2" x2="1082.6" y2="499.5" stroke="#00ff00" stroke-width="2.1"/><polyline points="722.8,402.4 773.9,350.4 833.5,374.7" fill="none" stroke="#00ff00" stroke-width="2.1"/><polyline points="763.2,400.3 780.3,379 841,405.8" fill="none" stroke="#00ff00" stroke-width="2.1"/><polyline points="564.2,563.3 511.7,616.7 571.7,639.2" fill="none" stroke="#00ff00" stroke-width="2.1"/><polyline points="541.7,621.7 516.7,643.3 578.3,670.8" fill="none" stroke="#00ff00" stroke-width="2.1"/><polyline points="866.7,687.4 813.9,739.3 754.2,714.7" fill="none" stroke="#00ff00" stroke-width="2.1"/><polyline points="873.6,717.5 820.4,770.3 760.2,744.8" fill="none" stroke="#00ff00" stroke-width="2.1"/><polyline points="1015.8,450 1077.5,478.3 1022.5,527.5" fill="none" stroke="#00ff00" stroke-width="2.1"/><polyline points="1068,500 1083.3,504.2 1030.8,557.5" fill="none" stroke="#00ff00" stroke-width="2.1"/>
</svg><!--/MODEL-->

<!-- splitter + right panel -->
<div class="a" style="left:1568px;top:95px;width:352px;height:918px;background:#f0f0f0"></div>
<div class="a" style="left:1573px;top:95px;width:1px;height:918px;background:#fff"></div>
<svg class="a" style="left:1569px;top:538px" width="5" height="32" viewBox="0 0 5 32"><g fill="#808080"><rect x="2" y="0" width="1.5" height="1.5"/><rect x="2" y="4" width="1.5" height="1.5"/><rect x="2" y="8" width="1.5" height="1.5"/><rect x="2" y="12" width="1.5" height="1.5"/><rect x="2" y="16" width="1.5" height="1.5"/><rect x="2" y="20" width="1.5" height="1.5"/><rect x="2" y="24" width="1.5" height="1.5"/><rect x="2" y="28" width="1.5" height="1.5"/></g></svg>
<div class="a" style="left:1576px;top:104.5px;width:16px;height:66px;overflow:visible">
 <div style="position:absolute;left:16px;top:0;transform-origin:0 0;transform:rotate(90deg);white-space:nowrap;font-size:11px;color:#000;line-height:14px">Context area</div>
</div>
<div class="a" style="left:1596px;top:96px;width:324px;height:535px;background:#fff;border-left:2px solid #a0a0a0;border-top:2px solid #a0a0a0;border-bottom:1px solid #a2a4a8;box-shadow:0 1px 0 #fff"></div>
<div class="a" style="left:1919px;top:98px;width:1px;height:533px;background:#a8a8a8"></div>
<!-- tree -->
<div class="a" style="left:1603px;top:104px;width:9px;height:9px;border:1px solid #a0a0a0;background:#fff"></div>
<div class="a" style="left:1605px;top:108px;width:5px;height:1px;background:#000"></div>
<div class="a" style="left:1607px;top:106px;width:1px;height:5px;background:#000"></div>
<svg class="a" style="left:1600px;top:100px" width="20" height="66" viewBox="1600 100 20 66">
 <g stroke="#909090" stroke-width="1" stroke-dasharray="1 1">
  <line x1="1613" y1="108.5" x2="1618" y2="108.5"/>
  <line x1="1608.5" y1="114" x2="1608.5" y2="163"/>
  <line x1="1609" y1="126.5" x2="1618" y2="126.5"/>
  <line x1="1609" y1="144.5" x2="1618" y2="144.5"/>
  <line x1="1609" y1="162.5" x2="1618" y2="162.5"/>
 </g>
</svg>
<svg class="a" style="left:1618px;top:99px" width="24" height="72" viewBox="1618 99 24 72">
 <defs>
  <radialGradient id="tb1" cx="0.4" cy="0.35" r="0.7"><stop offset="0" stop-color="#a8a8a8"/><stop offset="1" stop-color="#505050"/></radialGradient>
  <radialGradient id="tb2" cx="0.4" cy="0.35" r="0.7"><stop offset="0" stop-color="#e8e8e8"/><stop offset="1" stop-color="#8a8a8a"/></radialGradient>
  <radialGradient id="tb3" cx="0.4" cy="0.35" r="0.7"><stop offset="0" stop-color="#ffffff"/><stop offset="1" stop-color="#b0b0b0"/></radialGradient>
 </defs>
 <circle cx="1627.5" cy="104.3" r="4.3" fill="url(#tb1)"/>
 <circle cx="1632.2" cy="109.4" r="4.4" fill="url(#tb2)"/>
 <circle cx="1625.8" cy="111.5" r="3.9" fill="url(#tb3)"/>
 <g fill="#3a3a3a"><rect x="1621" y="119.4" width="15.8" height="1.6"/><rect x="1621" y="122.4" width="15.8" height="1.6"/><rect x="1621" y="125.4" width="15.8" height="1.6"/><rect x="1621" y="128.4" width="15.8" height="1.6"/><rect x="1621" y="131.4" width="15.8" height="1.6"/></g>
 <path d="M1626.5 141 C1626.5 138 1627.5 136.8 1629 136.8 C1630.5 136.8 1631.5 138 1631.5 141 Z" fill="#b8b8b8" stroke="#404040" stroke-width="0.8"/>
 <path d="M1625 141 h8 l1 1.5 v4.5 l-1 1.2 h-8 l-1 -1.2 v-4.5 z" fill="#8a8a8a" stroke="#303030" stroke-width="0.8"/>
 <rect x="1626.8" y="142.6" width="4.4" height="3.6" fill="#2a2a2a"/>
 <path d="M1625.8 148.3 h6.4 v2.6 h-6.4 z" fill="#6a6a6a" stroke="#303030" stroke-width="0.7"/>
 <path d="M1627.6 148.3 v2.6 M1629 148.3 v2.6 M1630.4 148.3 v2.6" stroke="#202020" stroke-width="0.6"/>
 <g fill="#1766b2"><rect x="1629" y="154.8" width="3.6" height="2.8" rx="0.7" transform="rotate(25 1630.8 156.2)"/><rect x="1621.2" y="159.2" width="3.4" height="3.2" rx="0.7" transform="rotate(-40 1622.9 160.8)"/><rect x="1632.8" y="161.2" width="3.4" height="3.2" rx="0.7" transform="rotate(-40 1634.5 162.8)"/><rect x="1624.3" y="165.2" width="3.4" height="3.2" rx="0.7" transform="rotate(-40 1626 166.8)"/></g>
 <rect x="1626.8" y="159.3" width="4.4" height="3.4" rx="0.9" fill="#e0107a" transform="rotate(-25 1629 161)"/>
</svg>
<div class="a" style="left:1643px;top:99px;height:18px;overflow:hidden;font-size:15px;font-weight:bold;line-height:25px;white-space:nowrap">Parts</div>
<div class="a" style="left:1643px;top:117px;height:18px;overflow:hidden;font-size:15px;font-weight:bold;line-height:25px;white-space:nowrap">Slices</div>
<div class="a" style="left:1643px;top:135px;height:18px;overflow:hidden;font-size:15px;font-weight:bold;line-height:25px;white-space:nowrap">Ultimaker (volumetric)</div>
<div class="a" style="left:1643px;top:153px;height:18px;overflow:hidden;font-size:15px;font-weight:bold;line-height:25px;white-space:nowrap">BfB RapMan (1 Extruder)</div>
<svg class="a" style="left:1899px;top:102px" width="17" height="12" viewBox="0 0 17 12"><path d="M1 1 L3 0.5 L4.5 2 L9 2 L9 10.5 L1.5 11 Z" fill="#ffc890" stroke="#c07020" stroke-width="0.5"/><path d="M1.5 11 L4 5 L12 4.5 L9.5 11 Z" fill="#ff9020" stroke="#b06010" stroke-width="0.5"/><path d="M7 3 C9 1 12 1 14 3 L15.5 2.5 L14.5 6 L11.5 5 L12.8 4.3 C11.5 3 9.5 3 8 4.5 Z" fill="#d8d8d8" stroke="#404040" stroke-width="0.8"/></svg><svg class="a" style="left:1899px;top:120px" width="17" height="12" viewBox="0 0 17 12"><path d="M1 1 L3 0.5 L4.5 2 L9 2 L9 10.5 L1.5 11 Z" fill="#ffc890" stroke="#c07020" stroke-width="0.5"/><path d="M1.5 11 L4 5 L12 4.5 L9.5 11 Z" fill="#ff9020" stroke="#b06010" stroke-width="0.5"/><path d="M7 3 C9 1 12 1 14 3 L15.5 2.5 L14.5 6 L11.5 5 L12.8 4.3 C11.5 3 9.5 3 8 4.5 Z" fill="#d8d8d8" stroke="#404040" stroke-width="0.8"/></svg><svg class="a" style="left:1899px;top:138px" width="17" height="12" viewBox="0 0 17 12"><path d="M1 1 L3 0.5 L4.5 2 L9 2 L9 10.5 L1.5 11 Z" fill="#ffc890" stroke="#c07020" stroke-width="0.5"/><path d="M1.5 11 L4 5 L12 4.5 L9.5 11 Z" fill="#ff9020" stroke="#b06010" stroke-width="0.5"/><path d="M7 3 C9 1 12 1 14 3 L15.5 2.5 L14.5 6 L11.5 5 L12.8 4.3 C11.5 3 9.5 3 8 4.5 Z" fill="#d8d8d8" stroke="#404040" stroke-width="0.8"/></svg><svg class="a" style="left:1899px;top:156px" width="17" height="12" viewBox="0 0 17 12"><path d="M1 1 L3 0.5 L4.5 2 L9 2 L9 10.5 L1.5 11 Z" fill="#ffc890" stroke="#c07020" stroke-width="0.5"/><path d="M1.5 11 L4 5 L12 4.5 L9.5 11 Z" fill="#ff9020" stroke="#b06010" stroke-width="0.5"/><path d="M7 3 C9 1 12 1 14 3 L15.5 2.5 L14.5 6 L11.5 5 L12.8 4.3 C11.5 3 9.5 3 8 4.5 Z" fill="#d8d8d8" stroke="#404040" stroke-width="0.8"/></svg>


<!-- cuts group -->
<div class="a" style="left:1601px;top:644px;width:315px;height:148px;border:1px solid #d5dfe5;border-radius:3px;box-shadow:inset 1px 1px 0 #fff"></div>
<div class="a" style="left:1607px;top:637px;padding:0 3px;background:#f0f0f0;font-size:11px;line-height:14px">Cuts</div>
<div class="a" style="left:1610px;top:664px;font-size:11px;line-height:14px">X:</div>
<div class="a" style="left:1627px;top:664.5px;width:24px;height:13px;border:2px solid #ff9010;border-radius:3px;background:#e2e2e6"></div>
<div class="a" style="left:1659px;top:663.5px;width:172px;height:15px;background:linear-gradient(#e6e6e6,#f0f0f0 40%,#eeeeee 60%,#e2e2e2)"></div>
<svg class="a" style="left:1659px;top:663.5px" width="172" height="15" viewBox="0 0 172 15">
 <path d="M8 7.5 L11 4.5 L11 10.5 Z" fill="#202020"/>
 <path d="M164 7.5 L161 4.5 L161 10.5 Z" fill="#202020"/>
 <rect x="22.5" y="0.5" width="18" height="14" rx="1.5" fill="#ececec" stroke="#8c8c8c" stroke-width="1"/>
 <rect x="23.5" y="1.5" width="16" height="6" fill="#f6f6f6"/>
 <path d="M28.5 4v7 M31.5 4v7 M34.5 4v7" stroke="#4a4a4a" stroke-width="1"/>
</svg>
<div class="a" style="left:1837px;top:661px;width:45px;height:21px;background:#fff;border:1px solid #dcdcdc;border-top-color:#c8c8c8"></div>
<div class="a" style="left:1843px;top:664px;font-size:11px;line-height:14px">0.00</div>
<div class="a" style="left:1886px;top:664px;font-size:11px;line-height:14px">mm</div><div class="a" style="left:1610px;top:690px;font-size:11px;line-height:14px">Y:</div>
<div class="a" style="left:1627px;top:690.5px;width:24px;height:13px;border:2px solid #ff9010;border-radius:3px;background:#e2e2e6"></div>
<div class="a" style="left:1659px;top:689.5px;width:172px;height:15px;background:linear-gradient(#e6e6e6,#f0f0f0 40%,#eeeeee 60%,#e2e2e2)"></div>
<svg class="a" style="left:1659px;top:689.5px" width="172" height="15" viewBox="0 0 172 15">
 <path d="M8 7.5 L11 4.5 L11 10.5 Z" fill="#202020"/>
 <path d="M164 7.5 L161 4.5 L161 10.5 Z" fill="#202020"/>
 <rect x="22.5" y="0.5" width="18" height="14" rx="1.5" fill="#ececec" stroke="#8c8c8c" stroke-width="1"/>
 <rect x="23.5" y="1.5" width="16" height="6" fill="#f6f6f6"/>
 <path d="M28.5 4v7 M31.5 4v7 M34.5 4v7" stroke="#4a4a4a" stroke-width="1"/>
</svg>
<div class="a" style="left:1837px;top:687px;width:45px;height:21px;background:#fff;border:1px solid #dcdcdc;border-top-color:#c8c8c8"></div>
<div class="a" style="left:1843px;top:690px;font-size:11px;line-height:14px">0.00</div>
<div class="a" style="left:1886px;top:690px;font-size:11px;line-height:14px">mm</div><div class="a" style="left:1610px;top:716px;font-size:11px;line-height:14px">Z:</div>
<div class="a" style="left:1627px;top:716.5px;width:24px;height:13px;border:2px solid #ff9010;border-radius:3px;background:#e2e2e6"></div>
<div class="a" style="left:1659px;top:715.5px;width:172px;height:15px;background:linear-gradient(#e6e6e6,#f0f0f0 40%,#eeeeee 60%,#e2e2e2)"></div>
<svg class="a" style="left:1659px;top:715.5px" width="172" height="15" viewBox="0 0 172 15">
 <path d="M8 7.5 L11 4.5 L11 10.5 Z" fill="#202020"/>
 <path d="M164 7.5 L161 4.5 L161 10.5 Z" fill="#202020"/>
 <rect x="22.5" y="0.5" width="18" height="14" rx="1.5" fill="#ececec" stroke="#8c8c8c" stroke-width="1"/>
 <rect x="23.5" y="1.5" width="16" height="6" fill="#f6f6f6"/>
 <path d="M28.5 4v7 M31.5 4v7 M34.5 4v7" stroke="#4a4a4a" stroke-width="1"/>
</svg>
<div class="a" style="left:1837px;top:713px;width:45px;height:21px;background:#fff;border:1px solid #dcdcdc;border-top-color:#c8c8c8"></div>
<div class="a" style="left:1843px;top:716px;font-size:11px;line-height:14px">0.00</div>
<div class="a" style="left:1886px;top:716px;font-size:11px;line-height:14px">mm</div>
<div class="a" style="left:1611px;top:741.5px;width:295px;height:21px;border:1px solid #707070;border-radius:3px;background:linear-gradient(#f2f2f2,#ebebeb 50%,#dddddd 51%,#cfcfcf)"></div>
<div class="a" style="left:1615px;top:745px;font-size:11px;line-height:14px">&lt;cutting disabled&gt;</div>
<svg class="a" style="left:1890px;top:748px" width="10" height="6" viewBox="0 0 10 6"><path d="M0.5 0.5 L9.5 0.5 L5 5.5 Z" fill="#000"/></svg>
<div class="a" style="left:1673px;top:768.5px;width:112px;height:19px;border:1px solid #adb2b5;border-radius:3px;background:#f4f4f4"></div>
<div class="a" style="left:1673px;top:771px;width:112px;text-align:center;font-size:11px;line-height:14px;color:#838383">Execute cut</div>
<div class="a" style="left:1794px;top:768.5px;width:112px;height:19px;border:1px solid #707070;border-radius:3px;background:linear-gradient(#f2f2f2,#ebebeb 50%,#dddddd 51%,#cfcfcf)"></div>
<div class="a" style="left:1794px;top:771px;width:112px;text-align:center;font-size:11px;line-height:14px">Reset</div>
<!-- information group -->
<div class="a" style="left:1601px;top:801px;width:315px;height:88px;border:1px solid #d5dfe5;border-radius:3px;box-shadow:inset 1px 1px 0 #fff"></div>
<div class="a" style="left:1607px;top:794px;padding:0 3px;background:#f0f0f0;font-size:11px;line-height:14px">Information</div>
<div class="a" style="left:1611px;top:820.5px;font-size:11px;line-height:14px">Length:</div>
<div class="a" style="left:1655px;top:817.0px;width:53px;height:21px;background:#fff;border:1px solid #dadada;border-top-color:#c4c4c4"></div>
<div class="a" style="left:1655px;top:820.5px;width:47px;text-align:right;font-size:11px;line-height:14px">197.63</div>
<div class="a" style="left:1715px;top:820.5px;font-size:11px;line-height:14px">mm</div>
<div class="a" style="left:1749px;top:820.5px;font-size:11px;line-height:14px">Volume:</div>
<div class="a" style="left:1819px;top:817.0px;width:63px;height:21px;background:#fff;border:1px solid #dadada;border-top-color:#c4c4c4"></div>
<div class="a" style="left:1819px;top:820.5px;width:57px;text-align:right;font-size:11px;line-height:14px">85.13</div>
<div class="a" style="left:1885px;top:820.5px;font-size:11px;line-height:14px">cm&sup3;</div>
<div class="a" style="left:1611px;top:844.5px;font-size:11px;line-height:14px">Width:</div>
<div class="a" style="left:1655px;top:841.0px;width:53px;height:21px;background:#fff;border:1px solid #dadada;border-top-color:#c4c4c4"></div>
<div class="a" style="left:1655px;top:844.5px;width:47px;text-align:right;font-size:11px;line-height:14px">222.31</div>
<div class="a" style="left:1715px;top:844.5px;font-size:11px;line-height:14px">mm</div>
<div class="a" style="left:1749px;top:844.5px;font-size:11px;line-height:14px">Area:</div>
<div class="a" style="left:1819px;top:841.0px;width:63px;height:21px;background:#fff;border:1px solid #dadada;border-top-color:#c4c4c4"></div>
<div class="a" style="left:1819px;top:844.5px;width:57px;text-align:right;font-size:11px;line-height:14px">862.87</div>
<div class="a" style="left:1885px;top:844.5px;font-size:11px;line-height:14px">cm&sup2;</div>
<div class="a" style="left:1611px;top:868.5px;font-size:11px;line-height:14px">Height:</div>
<div class="a" style="left:1655px;top:865.0px;width:53px;height:21px;background:#fff;border:1px solid #dadada;border-top-color:#c4c4c4"></div>
<div class="a" style="left:1655px;top:868.5px;width:47px;text-align:right;font-size:11px;line-height:14px">21.48</div>
<div class="a" style="left:1715px;top:868.5px;font-size:11px;line-height:14px">mm</div>
<div class="a" style="left:1749px;top:868.5px;font-size:11px;line-height:14px">Triangles:</div>
<div class="a" style="left:1819px;top:865.0px;width:63px;height:21px;background:#fff;border:1px solid #dadada;border-top-color:#c4c4c4"></div>
<div class="a" style="left:1819px;top:868.5px;width:57px;text-align:right;font-size:11px;line-height:14px">2106</div>
<div class="a" style="left:1885px;top:868.5px;font-size:11px;line-height:14px"></div>
<div class="a" style="left:1601px;top:897px;width:315px;height:23px;border:1px solid #a0a0a0;border-top-color:#fff;border-left-color:#fff;background:#f0f0f0"></div>
<div class="a" style="left:1601px;top:901px;width:315px;text-align:center;font-size:11px;line-height:14px">1 of 1 part is selected.</div>
<div class="a" style="left:1568px;top:1012px;width:352px;height:2px;background:#9a9a9a"></div>
<div class="a" style="left:1596px;top:1010px;width:324px;height:2px;background:#a0a0a0"></div>
<div class="a" style="left:1596px;top:632px;width:1px;height:378px;background:#fff"></div>
<div class="a" style="left:1568px;top:95px;width:1px;height:917px;background:#fafafa"></div>
<div class="a" style="left:1574px;top:1011px;width:22px;height:1px;background:#fff"></div>

<div id="status" class="a"></div>
<svg class="a" style="left:11px;top:1022px" width="14" height="14" viewBox="0 0 14 14"><path d="M4.3 0.8 L9.7 0.8 L13.2 4.3 L13.2 9.7 L9.7 13.2 L4.3 13.2 L0.8 9.7 L0.8 4.3 Z" fill="#f00000" stroke="#707070" stroke-width="0.6"/></svg>
<div class="a" style="left:25px;top:1015px;width:1px;height:24px;background:#d8d4d0"></div>
<div class="a" style="left:30px;top:1021px;font-size:11px;line-height:14px">rotate/move</div>
<div class="a" style="left:225px;top:1015px;width:1px;height:24px;background:#d8d4d0"></div>
<div class="a" style="left:230px;top:1021px;font-size:11px;line-height:14px">move and rotate the selected parts by the mouse and the cursor keys</div>
<div class="a" style="left:725px;top:1015px;width:1px;height:24px;background:#d8d4d0"></div>
<div class="a" style="left:753px;top:1026px;width:143px;height:11px"></div>
<div class="a" style="left:753px;top:1026px;width:1143px;height:11px;border:1px solid #a8a8a8;border-radius:2px;background:linear-gradient(#f4f4f4,#dcdcdc 50%,#d0d0d0 60%,#e0e0e0)"></div>
<svg class="a" style="left:1906px;top:1028px" width="12" height="12" viewBox="0 0 12 12"><g fill="#b0b0b0"><rect x="9" y="1" width="2" height="2"/><rect x="6" y="4" width="2" height="2"/><rect x="9" y="4" width="2" height="2"/><rect x="3" y="7" width="2" height="2"/><rect x="6" y="7" width="2" height="2"/><rect x="9" y="7" width="2" height="2"/></g></svg>
<div class="a" style="left:8px;top:35px;width:1px;height:1006px;background:#646e7a"></div>
</body></html>
